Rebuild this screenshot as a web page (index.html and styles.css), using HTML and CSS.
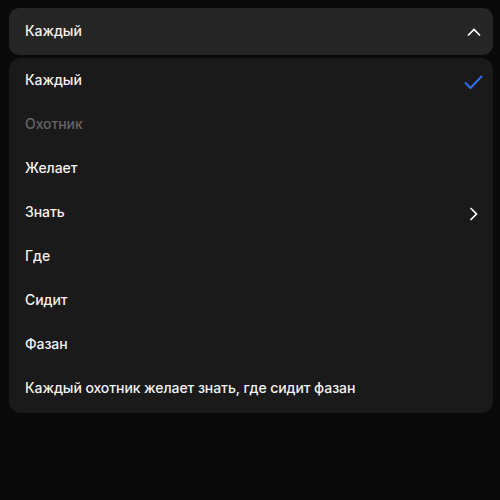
FILE: index.html
```html
<!DOCTYPE html>
<html lang="ru">
<head>
<meta charset="utf-8">
<link rel="stylesheet" href="styles.css">
</head>
<body>
<div class="select">
  <button class="trigger">
    <span class="label">Каждый</span>
    <svg class="icon" width="20" height="20" viewBox="0 0 20 20"><path d="M5 13.5 L11 7.5 L17 13.5" fill="none" stroke="#fff" stroke-width="1.7"/></svg>
  </button>
  <ul class="menu">
    <li class="item"><span class="label">Каждый</span>
      <svg class="icon" width="20" height="20" viewBox="0 0 20 20"><path d="M2 12.5 L7.5 18 L19 6" fill="none" stroke="#2f6fe4" stroke-width="2"/></svg>
    </li>
    <li class="item disabled"><span class="label">Охотник</span></li>
    <li class="item"><span class="label">Желает</span></li>
    <li class="item"><span class="label">Знать</span>
      <svg class="icon" width="20" height="20" viewBox="0 0 20 20"><path d="M7.5 6 L13.5 12 L7.5 18" fill="none" stroke="#fff" stroke-width="1.7"/></svg>
    </li>
    <li class="item"><span class="label">Где</span></li>
    <li class="item"><span class="label">Сидит</span></li>
    <li class="item"><span class="label">Фазан</span></li>
    <li class="item"><span class="label">Каждый охотник желает знать, где сидит фазан</span></li>
  </ul>
</div>
</body>
</html>
```
FILE: styles.css
```css
html, body {
  margin: 0;
  height: 100%;
  background: #0a0a0a;
}
body {
  padding: 8px 7px 0 9px;
  box-sizing: border-box;
  font-family: Inter, "Noto Sans", sans-serif;
  font-size: 14px;
  font-weight: 500;
  letter-spacing: -0.08px;
  color: #f2f2f2;
}
.select {
  display: flex;
  flex-direction: column;
  gap: 3px;
}
.trigger {
  display: flex;
  align-items: center;
  justify-content: space-between;
  height: 47px;
  padding: 0 10px 0 16px;
  border: 0;
  border-radius: 10px;
  background: #262626;
  color: #f2f2f2;
  font: inherit;
  letter-spacing: inherit;
  text-align: left;
}
.trigger .label {
  margin-top: -3px;
}
.menu {
  list-style: none;
  margin: 0;
  padding: 0 0 3px;
  border-radius: 12px;
  background: #1a1a1a;
}
.item {
  display: flex;
  align-items: center;
  justify-content: space-between;
  height: 44px;
  padding: 0 10px 0 16px;
}
.item .label {
  margin-top: -1px;
}
.item.disabled {
  color: #666;
}
.icon {
  flex: none;
}
```
